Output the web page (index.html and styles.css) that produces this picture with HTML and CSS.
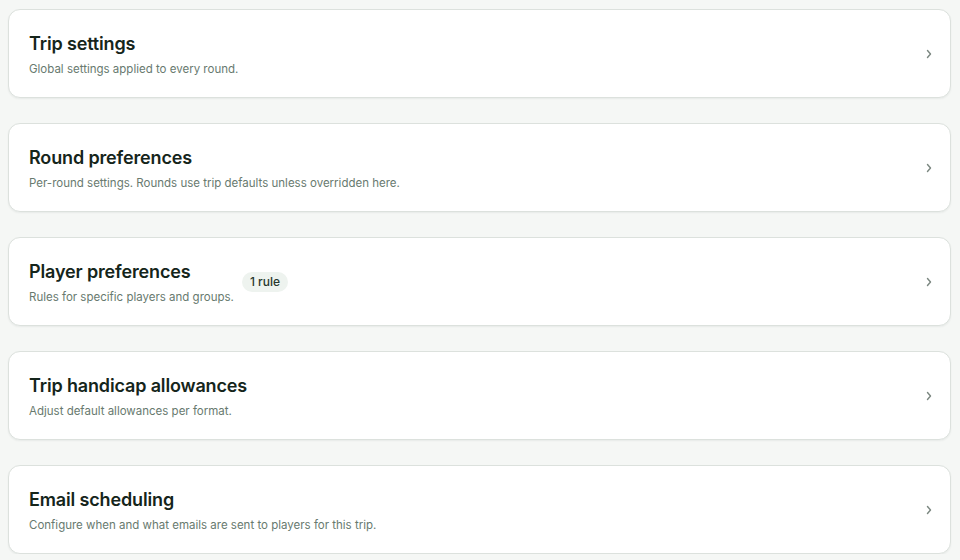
FILE: index.html
```html
<!DOCTYPE html>
<html>
<head>
<meta charset="utf-8">
<link rel="stylesheet" href="styles.css">
</head>
<body>
<div class="list">
  <div class="card">
    <div class="main">
      <div class="text">
        <div class="title">Trip settings</div>
        <div class="sub">Global settings applied to every round.</div>
      </div>
    </div>
    <svg class="chev" width="8" height="12" viewBox="0 0 8 12"><path d="M2.5 2.5 L5.5 6 L2.5 9.5" fill="none" stroke="#7b8780" stroke-width="1.4" stroke-linecap="round" stroke-linejoin="round"/></svg>
  </div>
  <div class="card">
    <div class="main">
      <div class="text">
        <div class="title">Round preferences</div>
        <div class="sub">Per-round settings. Rounds use trip defaults unless overridden here.</div>
      </div>
    </div>
    <svg class="chev" width="8" height="12" viewBox="0 0 8 12"><path d="M2.5 2.5 L5.5 6 L2.5 9.5" fill="none" stroke="#7b8780" stroke-width="1.4" stroke-linecap="round" stroke-linejoin="round"/></svg>
  </div>
  <div class="card">
    <div class="main">
      <div class="text">
        <div class="title">Player preferences</div>
        <div class="sub">Rules for specific players and groups.</div>
      </div>
      <span class="badge">1 rule</span>
    </div>
    <svg class="chev" width="8" height="12" viewBox="0 0 8 12"><path d="M2.5 2.5 L5.5 6 L2.5 9.5" fill="none" stroke="#7b8780" stroke-width="1.4" stroke-linecap="round" stroke-linejoin="round"/></svg>
  </div>
  <div class="card">
    <div class="main">
      <div class="text">
        <div class="title">Trip handicap allowances</div>
        <div class="sub">Adjust default allowances per format.</div>
      </div>
    </div>
    <svg class="chev" width="8" height="12" viewBox="0 0 8 12"><path d="M2.5 2.5 L5.5 6 L2.5 9.5" fill="none" stroke="#7b8780" stroke-width="1.4" stroke-linecap="round" stroke-linejoin="round"/></svg>
  </div>
  <div class="card">
    <div class="main">
      <div class="text">
        <div class="title">Email scheduling</div>
        <div class="sub">Configure when and what emails are sent to players for this trip.</div>
      </div>
    </div>
    <svg class="chev" width="8" height="12" viewBox="0 0 8 12"><path d="M2.5 2.5 L5.5 6 L2.5 9.5" fill="none" stroke="#7b8780" stroke-width="1.4" stroke-linecap="round" stroke-linejoin="round"/></svg>
  </div>
</div>
</body>
</html>
```
FILE: styles.css
```css
html, body {
  margin: 0;
  padding: 0;
  background: #f5f7f5;
}
body {
  padding: 9px 9px 0 8px;
  font-family: Inter, "Noto Sans", sans-serif;
}
.list {
  display: flex;
  flex-direction: column;
  gap: 25px;
}
.card {
  background: #ffffff;
  border: 1px solid #dce1dd;
  border-radius: 12px;
  box-shadow: 0 1px 2px rgba(20, 40, 30, 0.06);
  box-sizing: border-box;
  height: 89px;
  padding: 0 17px 0 20px;
  display: flex;
  align-items: center;
  justify-content: space-between;
}
.main {
  display: flex;
  align-items: center;
  gap: 8px;
}
.text {
  padding-top: 2px;
}
.title {
  font-size: 18px;
  line-height: 22px;
  font-weight: 600;
  color: #15251b;
  letter-spacing: -0.15px;
}
.sub {
  margin-top: 6px;
  font-size: 11.5px;
  line-height: 16px;
  color: #687a6f;
}
.badge {
  background: #eef3ef;
  color: #27372d;
  font-size: 12px;
  line-height: 20px;
  padding: 0 8px;
  border-radius: 10px;
  font-weight: 500;
}
```
